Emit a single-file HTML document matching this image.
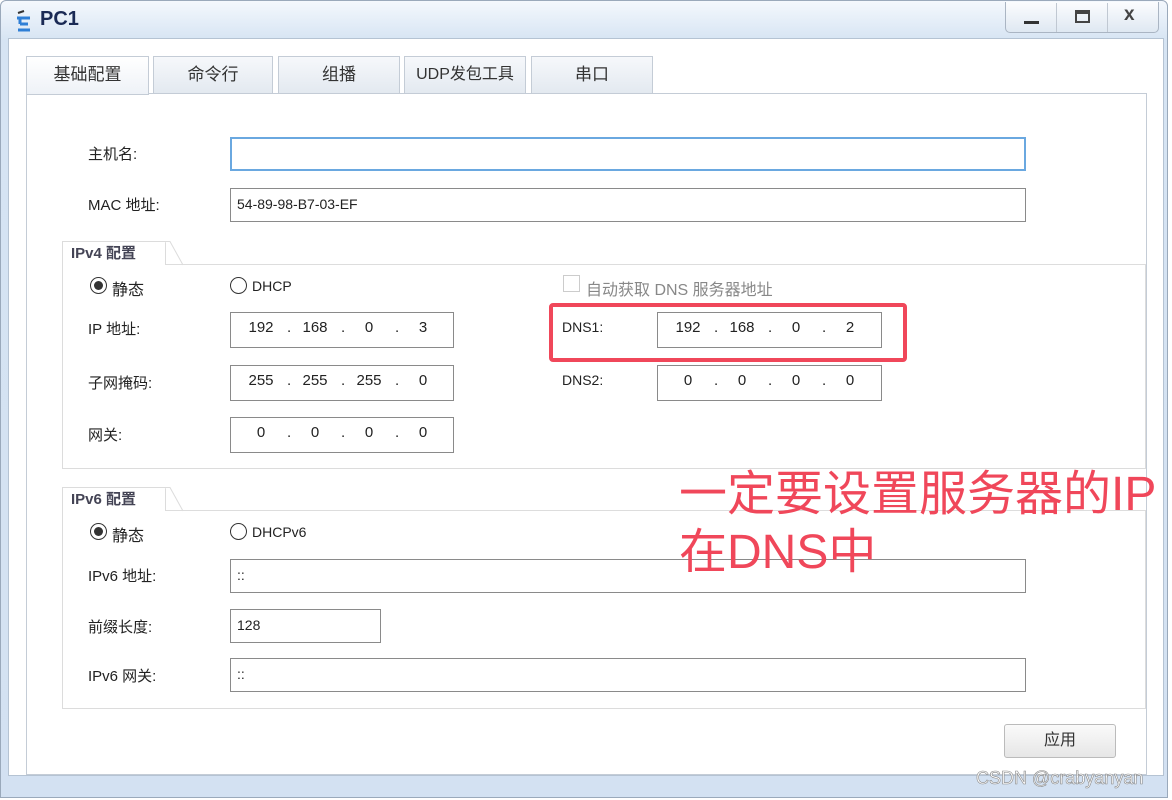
<!DOCTYPE html>
<html><head><meta charset="utf-8"><style>
*{margin:0;padding:0;box-sizing:border-box}
body{width:1172px;height:800px;background:#fff;font-family:"Liberation Sans","Noto Sans CJK SC",sans-serif;position:relative;overflow:hidden;color:#222}
.a{position:absolute}
.win{left:0;top:0;width:1168px;height:798px;background:linear-gradient(#f4f8fd,#d6e4f3 40px,#d3e1f2);border:1px solid #9aa9bb;border-radius:6px 6px 0 0}
.inner{left:8px;top:38px;width:1156px;height:738px;background:#fff;border:1px solid #b5c3d3}
.tab{top:56px;height:38px;border:1px solid #c4ccd6;background:linear-gradient(#f6f8fb,#e3e9f0);font-size:17px;text-align:center;line-height:36px;color:#333}
.panel{left:26px;top:93px;width:1121px;height:682px;border:1px solid #c4ccd6;background:#fff}
.lbl{font-size:15px;color:#222}
.inp{border:1px solid #8a8a8a;background:#fff;font-size:14px;padding-left:6px;line-height:31px}
.grp{border:1px solid #dcdcdc;border-top-color:#ddd}
.gt{font-size:15px;color:#445;background:#fff;border:1px solid #dcdcdc;border-bottom:none;height:24px;line-height:24px;padding-left:8px;font-weight:bold}
.ip{font-size:15px;white-space:nowrap;line-height:30px;padding-left:4px}
.ip span{display:inline-block;width:52px;text-align:center}
.ip i{display:inline-block;width:2px;font-style:normal;text-align:center}
.radio{width:17px;height:17px;border:1px solid #333;border-radius:50%;background:#fff}
.dot{left:3px;top:3px;width:9px;height:9px;border-radius:50%;background:#333}
</style></head><body>
<div class="a win"></div>
<svg class="a" style="left:14px;top:10px" width="22" height="24" viewBox="0 0 22 24"><path d="M4 3 L10 1" stroke="#333" stroke-width="2"/><path d="M3 8 H16 M6 8 V14 M6 14 H14 M4 20 H16" stroke="#2f7fd6" stroke-width="3"/></svg>
<div class="a" style="left:40px;top:8px;font-size:20px;color:#1a2a55;font-weight:bold">PC1</div>
<div class="a" style="left:1005px;top:2px;width:154px;height:31px;border:1px solid #aab5c3;border-top:none;border-radius:0 0 5px 5px;background:linear-gradient(#fbfcfe,#dfe8f2)"></div>
<div class="a" style="left:1056px;top:3px;width:1px;height:29px;background:#c0c8d2"></div>
<div class="a" style="left:1107px;top:3px;width:1px;height:29px;background:#c0c8d2"></div>
<div class="a" style="left:1024px;top:21px;width:15px;height:3px;background:#333"></div>
<div class="a" style="left:1075px;top:10px;width:15px;height:13px;border:2px solid #444;border-top-width:4px"></div>
<div class="a" style="left:1124px;top:4px;font-size:19px;font-weight:bold;color:#444">x</div>
<div class="a inner"></div>
<div class="a panel"></div>
<div class="a tab" style="left:26px;width:123px;background:linear-gradient(#fff,#eef2f7);height:39px">基础配置</div>
<div class="a tab" style="left:153px;width:120px">命令行</div>
<div class="a tab" style="left:278px;width:122px">组播</div>
<div class="a tab" style="left:404px;width:122px;font-size:16px">UDP发包工具</div>
<div class="a tab" style="left:531px;width:122px">串口</div>

<div class="a lbl" style="left:88px;top:143px">主机名:</div>
<div class="a inp" style="left:230px;top:137px;width:796px;height:34px;border:2px solid #6aa8e0"></div>
<div class="a lbl" style="left:88px;top:194px">MAC 地址:</div>
<div class="a inp" style="left:230px;top:188px;width:796px;height:34px">54-89-98-B7-03-EF</div>

<div class="a grp" style="left:62px;top:264px;width:1084px;height:205px"></div>
<div class="a gt" style="left:62px;top:241px;width:104px">IPv4 配置</div>
<svg class="a" style="left:165px;top:241px" width="20" height="25"><path d="M0 0.5 L5 0.5 L18 24" stroke="#dcdcdc" fill="#fff"/></svg>
<div class="a radio" style="left:90px;top:277px"><div class="a dot"></div></div>
<div class="a lbl" style="left:112px;top:276px;font-size:16px">静态</div>
<div class="a radio" style="left:230px;top:277px"></div>
<div class="a lbl" style="left:252px;top:278px;font-size:14px">DHCP</div>
<div class="a" style="left:563px;top:275px;width:17px;height:17px;border:1px solid #ccc"></div>
<div class="a lbl" style="left:586px;top:276px;font-size:16px;color:#888">自动获取 DNS 服务器地址</div>

<div class="a lbl" style="left:88px;top:318px">IP 地址:</div>
<div class="a inp ip" style="left:230px;top:312px;width:224px;height:36px"><span>192</span><i>.</i><span>168</span><i>.</i><span>0</span><i>.</i><span>3</span></div>
<div class="a lbl" style="left:88px;top:372px">子网掩码:</div>
<div class="a inp ip" style="left:230px;top:365px;width:224px;height:36px"><span>255</span><i>.</i><span>255</span><i>.</i><span>255</span><i>.</i><span>0</span></div>
<div class="a lbl" style="left:88px;top:424px">网关:</div>
<div class="a inp ip" style="left:230px;top:417px;width:224px;height:36px"><span>0</span><i>.</i><span>0</span><i>.</i><span>0</span><i>.</i><span>0</span></div>
<div class="a lbl" style="left:562px;top:319px;font-size:14px">DNS1:</div>
<div class="a inp ip" style="left:657px;top:312px;width:225px;height:36px"><span>192</span><i>.</i><span>168</span><i>.</i><span>0</span><i>.</i><span>2</span></div>
<div class="a lbl" style="left:562px;top:372px;font-size:14px">DNS2:</div>
<div class="a inp ip" style="left:657px;top:365px;width:225px;height:36px"><span>0</span><i>.</i><span>0</span><i>.</i><span>0</span><i>.</i><span>0</span></div>
<div class="a" style="left:549px;top:303px;width:358px;height:59px;border:4px solid #f0475a;border-radius:4px"></div>

<div class="a grp" style="left:62px;top:510px;width:1084px;height:199px"></div>
<div class="a gt" style="left:62px;top:487px;width:104px">IPv6 配置</div>
<svg class="a" style="left:165px;top:487px" width="20" height="25"><path d="M0 0.5 L5 0.5 L18 24" stroke="#dcdcdc" fill="#fff"/></svg>
<div class="a radio" style="left:90px;top:523px"><div class="a dot"></div></div>
<div class="a lbl" style="left:112px;top:522px;font-size:16px">静态</div>
<div class="a radio" style="left:230px;top:523px"></div>
<div class="a lbl" style="left:252px;top:524px;font-size:14px">DHCPv6</div>
<div class="a lbl" style="left:88px;top:565px">IPv6 地址:</div>
<div class="a inp" style="left:230px;top:559px;width:796px;height:34px">::</div>
<div class="a lbl" style="left:88px;top:616px">前缀长度:</div>
<div class="a inp" style="left:230px;top:609px;width:151px;height:34px">128</div>
<div class="a lbl" style="left:88px;top:665px">IPv6 网关:</div>
<div class="a inp" style="left:230px;top:658px;width:796px;height:34px">::</div>

<div class="a" style="left:679px;top:466px;font-size:48px;color:#f0475a;white-space:nowrap;line-height:58px">一定要设置服务器的IP<br>在DNS中</div>
<div class="a" style="left:1004px;top:724px;width:112px;height:34px;border:1px solid #bbb;border-radius:3px;background:linear-gradient(#fafafa,#e6e6e6);font-size:16px;text-align:center;line-height:32px;color:#333">应用</div>
<div class="a" style="left:976px;top:768px;font-size:18px;color:#fff;-webkit-text-stroke:0.6px #888">CSDN @crabyanyan</div>
</body></html>
